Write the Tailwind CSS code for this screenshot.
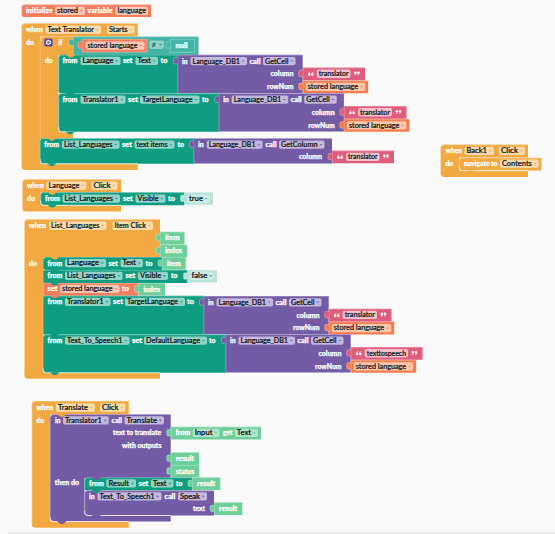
<!DOCTYPE html>
<html lang="en">
<head>
<meta charset="utf-8">
<title>Blocks workspace</title>
<script src="https://cdn.jsdelivr.net/npm/@tailwindcss/browser@4"></script>
</head>
<body class="bg-[#fafafa]">
<main class="h-[534px] w-[555px] overflow-hidden">
<svg id="ws" class="block h-[534px] w-[555px] font-['Lato','Open_Sans',sans-serif]" viewBox="0 0 555 534"></svg>
</main>
<script>
const ws = document.getElementById('ws');
const C = {o:'#f2a941', g:'#0f9d82', p:'#745ba6', t:'#42b5a6', r:'#f57c5c', s:'#f67c50', k:'#df5c7b', l:'#6fcf9a', w:'#b7e1da'};
const FC = {o:'#fbdcae', g:'#93d3c6', p:'#c4b8de', t:'#8dd3c9', r:'#fdc5b6', s:'#ffc7a9', k:'#f5bfcc', l:'#abe5c5', w:'#cdebe6'};
let out = '';
const path = (d, f, extra='') => { out += `<path d="${d}" fill="${f}" ${extra}/>`; };
const edge = d => path(d, 'none', 'stroke="#fff" stroke-opacity=".42" stroke-width=".7"');
// plain block; r rounds the left corners
function B(c, x, y, x2, y2, r=0) {
  path(`M${x+r} ${y}H${x2}V${y2}H${x+r}q${-r} 0 ${-r} ${-r}V${y+r}q0 ${-r} ${r} ${-r}z`, C[c]);
  edge(`M${x+.3} ${y2-r}V${y+r+.3}q0 ${-r} ${r} ${-r}H${x2}`);
}
// bright inner lip where a container's arm meets its footer
const L = (x, y, x2) => path(`M${x+.2} ${y-4.5}v1.3q0 3.3 3.3 3.3H${x2}`, 'none', 'stroke="#fff" stroke-opacity=".85" stroke-width=".9"');
// statement bump below a block
const N = (c, x, y) => path(`M${x} ${y-.4}h9.5l-2.6 2.3q-2.1 1-4.2 0z`, C[c]);
// value block with puzzle tab on its left
function V(c, x, y, x2, y2) {
  B(c, x, y, x2, y2);
  path(`M${x+.2} ${y+3}q-4.2 -1 -4.2 1v4q0 2 4.2 1z`, C[c]);
  edge(`M${x} ${y+3}q-4 -1 -4 1v4q0 2 4 1`);
}
// bracket-shaped container: header, arm and footer
function K(c, x, y, x2, hy, ix, fy, y2) {
  path(`M${x+4} ${y}H${x2}V${hy}H${ix}V${fy-2}q0 2 2 2H${x2}V${y2}H${x+4}q-4 0 -4 -4V${y+4}q0 -4 4 -4z`, C[c]);
  edge(`M${x+.3} ${y2-4}V${y+4}q0 -3.7 4 -3.7H${x2}`);
}
// white label
const W = (x, cy, x2, s) => { out += `<text x="${x}" y="${cy+2.3}" textLength="${x2-x}" lengthAdjust="spacingAndGlyphs" class="fill-white stroke-white stroke-[0.25px] text-[6.9px] font-black">${s}</text>`; };
// field, optionally with a drop-down arrow
function F(c, x, cy, x2, s, dd=1) {
  out += `<rect x="${x}" y="${cy-4.2}" width="${x2-x}" height="8.3" rx="1.8" fill="${FC[c]}"/>`;
  const e = x2 - (dd ? 7 : 2);
  out += `<text x="${x+2}" y="${cy+2.3}" textLength="${e-x-2}" lengthAdjust="spacingAndGlyphs" class="fill-[#101615] stroke-[#101615] stroke-[0.22px] text-[7px] font-medium">${s}</text>`;
  if (dd) path(`M${x2-5.2} ${cy-.7}h3l-1.5 1.6z`, C[c], 'opacity=".9"');
}
// curly quote mark drawn as two tapering drops
function Q(x, y, flip) {
  const d = 'M2.3 0Q0 .8 0 3a1.3 1.3 0 1 0 1.2-1.3Q1.5 .9 2.5 .5z';
  out += `<g fill="#fff" transform="translate(${x} ${y})${flip ? ' rotate(180)' : ''}"><path d="${d}"/><path d="${d}" transform="translate(3.2 0)"/></g>`;
}
const pink = (x, y, x2, s) => { V('k', x, y, x2, y+12.7);
  Q(x+5.2, y+4, 0); Q(x2-5.2, y+8.2, 1);
  F('k', x+14, y+6.3, x2-14.5, s, 0); };
const stored = (x, y) => { V('s', x, y, x+65.5, y+12.8); F('s', x+3, y+6.5, x+62.5, 'stored language'); };
const green = (x, y, x2, s) => { V('l', x, y, x2, y+12.7); W(x+5, y+6.4, x2-5, s); };
// database cell lookup
function cell(x, y, key, kx2) {
  V('p', x, y, x+125.2, y+38.3);
  W(x+4.5, y+6.4, x+10, 'in'); F('p', x+13, y+6.4, x+69.5, 'Language_DB1');
  W(x+72, y+6.4, x+83, 'call'); F('p', x+85.5, y+6.4, x+118, 'GetCell');
  W(x+93, y+19.2, x+116, 'column'); W(x+89.5, y+32.1, x+116, 'rowNum');
  stored(x+125.2, y+25.6); pink(x+125.2, y+12.7, kx2, key);
}

// variable initialiser
B('r', 21.5, 4.6, 151, 17, 3);
W(26, 11, 52.5, 'initialize'); F('r', 55, 11, 85, 'stored'); W(87.5, 11, 112.5, 'variable'); F('r', 115.5, 11, 148, 'language', 0);

// when Text_Translator.Starts
K('o', 21.5, 23.2, 137.7, 36.5, 40, 163.7, 170);
K('o', 40, 36.3, 73, 55, 58.5, 131.8, 138);
path('M39 42h4v97h-4z', C.o); edge('M40.2 138V41q0 -4 4 -4');
W(26, 29.9, 43, 'when'); F('o', 45.5, 29.6, 101, 'Text Translator'); F('o', 107, 29.6, 134.5, 'Starts');
W(26, 42.5, 34, 'do');
out += `<rect x="44.2" y="38.6" width="8.4" height="8" rx="1.6" fill="#5b46a0"/><path d="M47.8 39.8h1.2l.4 1 1-.3.7 1-.7.9.7.9-.7 1-1-.3-.4 1h-1.2l-.4-1-1 .3-.7-1 .7-.9-.7-.9.7-1 1 .3z" fill="#fff"/><circle cx="48.4" cy="42.4" r="1.2" fill="#5b46a0"/>`;
W(58.5, 42.8, 62.5, 'if'); W(45, 61, 52.5, 'do');
V('t', 73, 36.5, 198.5, 55);
V('r', 82, 39, 147, 52.3); edge('M82 52H147V39'); F('r', 85.5, 45.7, 144.5, 'stored language');
F('t', 149.5, 44.8, 164, '');
path('M151.8 43.9h4M151.8 45.8h4M155 42.4l-2.4 5', 'none', 'stroke="#1b4641" stroke-width=".7"');
path('M158.8 44.2h3l-1.5 1.6z', '#2b8f83');
V('t', 170, 39, 194.5, 52.3); edge('M170 52.3H194.5V39'); W(175.5, 45.7, 187.7, 'null');
B('g', 58.5, 54.8, 178, 93.2, 3); N('o', 66, 55);
W(62.5, 61, 77.5, 'from'); F('g', 80.5, 61, 120.5, 'Language'); W(123, 61, 132.5, 'set'); F('g', 135.5, 61, 158, 'Text'); W(160.5, 61, 167.5, 'to');
cell(177.5, 54.8, 'translator', 365);
B('g', 58.5, 93.3, 219, 131.8, 3); N('g', 65.5, 93.5); L(58.5, 131.8, 73); N('g', 65.5, 131.8);
W(62.5, 99.7, 77.5, 'from'); F('g', 80.5, 99.7, 125.5, 'Translator1'); W(128, 99.7, 138, 'set'); F('g', 140, 99.7, 199.5, 'TargetLanguage'); W(202, 99.7, 208.5, 'to');
cell(218.7, 93.3, 'translator', 406.5);
B('g', 40, 138.2, 194, 163.7, 3); N('o', 47, 138.2); L(40, 163.7, 137.7); N('g', 47, 163.7);
W(44.2, 144.7, 59, 'from'); F('g', 62, 144.7, 119.5, 'List_Languages'); W(122, 144.7, 132, 'set'); F('g', 134.5, 144.7, 174.5, 'text items'); W(177.5, 144.7, 184, 'to');
V('p', 193.5, 138.2, 332, 163.5);
W(198, 144.7, 203.7, 'in'); F('p', 206.8, 144.7, 262.5, 'Language_DB1'); W(265.5, 144.7, 276.5, 'call'); F('p', 279, 144.7, 324.5, 'GetColumn');
W(299, 157, 322, 'column'); pink(332, 150.6, 394, 'translator');

// when Language.Click
K('o', 22.3, 179.2, 121, 192.5, 40.5, 205.2, 211.5);
W(27, 185.8, 43.7, 'when'); F('o', 46.5, 185.6, 86.5, 'Language'); F('o', 91.5, 185.6, 117.5, 'Click'); W(27, 198.3, 35, 'do');
B('g', 40.5, 192.3, 184.5, 205.2, 3); N('o', 47.5, 192.4); L(40.5, 205.2, 121); N('g', 47.5, 205.2);
W(45, 198.7, 60, 'from'); F('g', 62.5, 198.6, 120, 'List_Languages'); W(123, 198.7, 132.7, 'set'); F('g', 135.5, 198.6, 165.5, 'Visible'); W(168, 198.7, 175, 'to');
V('w', 184.5, 192.3, 213, 204.8); F('w', 187, 198.6, 210, 'true'); path('M204.8 197.9h3l-1.5 1.6z', '#5fa89d');

// when List_Languages.ItemClick
K('o', 24.3, 219.3, 160, 257, 43, 372.5, 378.8);
W(29, 226.1, 46.3, 'when'); F('o', 49, 225.8, 106.5, 'List_Languages'); F('o', 112.5, 225.8, 153, 'Item Click');
green(160, 231.7, 184.5, 'item'); green(160, 244.6, 187, 'index');
W(29, 263.3, 37, 'do');
B('g', 43, 257, 162, 270, 3); N('o', 50, 257);
W(47.5, 263.2, 62.2, 'from'); F('g', 65, 263.1, 106, 'Language'); W(108.5, 263.2, 118, 'set'); F('g', 120.5, 263.1, 143, 'Text'); W(145.5, 263.2, 152.5, 'to');
green(162, 257, 185.7, 'item');
B('g', 43, 270, 187.5, 283, 1); N('g', 50, 270);
W(47.5, 276, 62.2, 'from'); F('g', 65, 276, 122.5, 'List_Languages'); W(125.5, 276, 135.2, 'set'); F('g', 138, 276, 168, 'Visible'); W(171, 276, 177.5, 'to');
V('w', 187.5, 270, 217, 282.5); F('w', 189.5, 276, 214.5, 'false'); path('M209.3 275.3h3l-1.5 1.6z', '#5fa89d');
B('r', 43, 283, 138.5, 295.8, 1); N('g', 50, 283);
W(47.5, 289, 57.5, 'set'); F('r', 60, 289, 119.5, 'stored language'); W(122, 289, 129, 'to');
green(138.5, 282.9, 165, 'index');
B('g', 43, 295.8, 204, 334.5, 1); N('r', 50, 295.8);
W(47.5, 302, 62.2, 'from'); F('g', 65, 302, 110.5, 'Translator1'); W(113, 302, 123, 'set'); F('g', 125, 302, 185, 'TargetLanguage'); W(187, 302, 194, 'to');
cell(203.5, 296, 'translator', 391.5);
B('g', 43, 334.5, 226, 372.7, 3); N('g', 50, 334.5); L(43, 372.7, 160); N('g', 50, 372.7);
W(47.5, 340.7, 62.2, 'from'); F('g', 65, 340.7, 129.5, 'Text_To_Speech1'); W(132, 340.7, 142, 'set'); F('g', 144, 340.7, 207, 'DefaultLanguage'); W(209, 340.7, 215.5, 'to');
cell(225.5, 334.3, 'texttospeech', 422.5);

// when Back1.Click
K('o', 440.5, 144.5, 528, 157.5, 459, 170.8, 177);
B('o', 459, 157.7, 541.5, 170.4, 3); L(459, 170.6, 528); N('o', 466, 170.8);
W(445.5, 151, 462, 'when'); F('o', 464.5, 151, 494, 'Back1'); F('o', 499, 151, 525, 'Click'); W(445.5, 163.8, 453.3, 'do');
W(464, 163.8, 497.5, 'navigate to'); F('o', 500, 163.6, 538.8, 'Contents');

// when Translate.Click
K('o', 31.7, 401, 128.7, 414.5, 50, 521.5, 527.8);
W(36.2, 408, 53.2, 'when'); F('o', 56, 407.7, 95, 'Translate'); F('o', 100, 407.7, 125.5, 'Click'); W(36.2, 420.2, 44.2, 'do');
K('p', 50, 414.2, 170.7, 478, 84.5, 515.5, 521.5); N('o', 57, 414.4); L(50, 521.5, 128.7); N('p', 57, 521.5);
W(55, 420.7, 60.5, 'in'); F('p', 63, 420.5, 108.7, 'Translator1'); W(111.5, 420.7, 122, 'call'); F('p', 124.5, 420.5, 164, 'Translate');
W(113, 433, 161, 'text to translate'); W(122, 445.8, 161.5, 'with outputs');
V('l', 170.7, 426.7, 261, 439.6); W(175.5, 433, 190.2, 'from'); F('l', 192.7, 433, 219.5, 'Input'); W(223, 433, 232.5, 'get'); F('l', 234.8, 433, 258, 'Text');
green(170.7, 452.2, 199, 'result'); green(170.7, 465, 199.3, 'status');
W(54.8, 483, 79, 'then do');
B('g', 84.5, 477.4, 192, 490.5, 3); N('p', 91.5, 477.5);
W(89, 483.8, 103.7, 'from'); F('g', 106.5, 483.5, 136, 'Result'); W(138.5, 483.8, 148.3, 'set'); F('g', 151, 483.5, 173.5, 'Text'); W(176, 483.8, 182.5, 'to');
green(192, 477.3, 220.3, 'result');
B('p', 84.5, 490.5, 214, 515.5, 3); N('g', 91.5, 490.5); L(84.5, 515.4, 170.7); N('p', 91.5, 515.5);
W(89, 496.8, 94.7, 'in'); F('p', 97.5, 496.5, 161.5, 'Text_To_Speech1'); W(164.5, 496.8, 175.2, 'call'); F('p', 178, 496.5, 207, 'Speak');
W(193, 509, 205, 'text'); green(214, 502.3, 242.3, 'result');

path('M8 532.5H555v1H8z', '#d9d9d9');
ws.innerHTML = out;
</script>
</body>
</html>
